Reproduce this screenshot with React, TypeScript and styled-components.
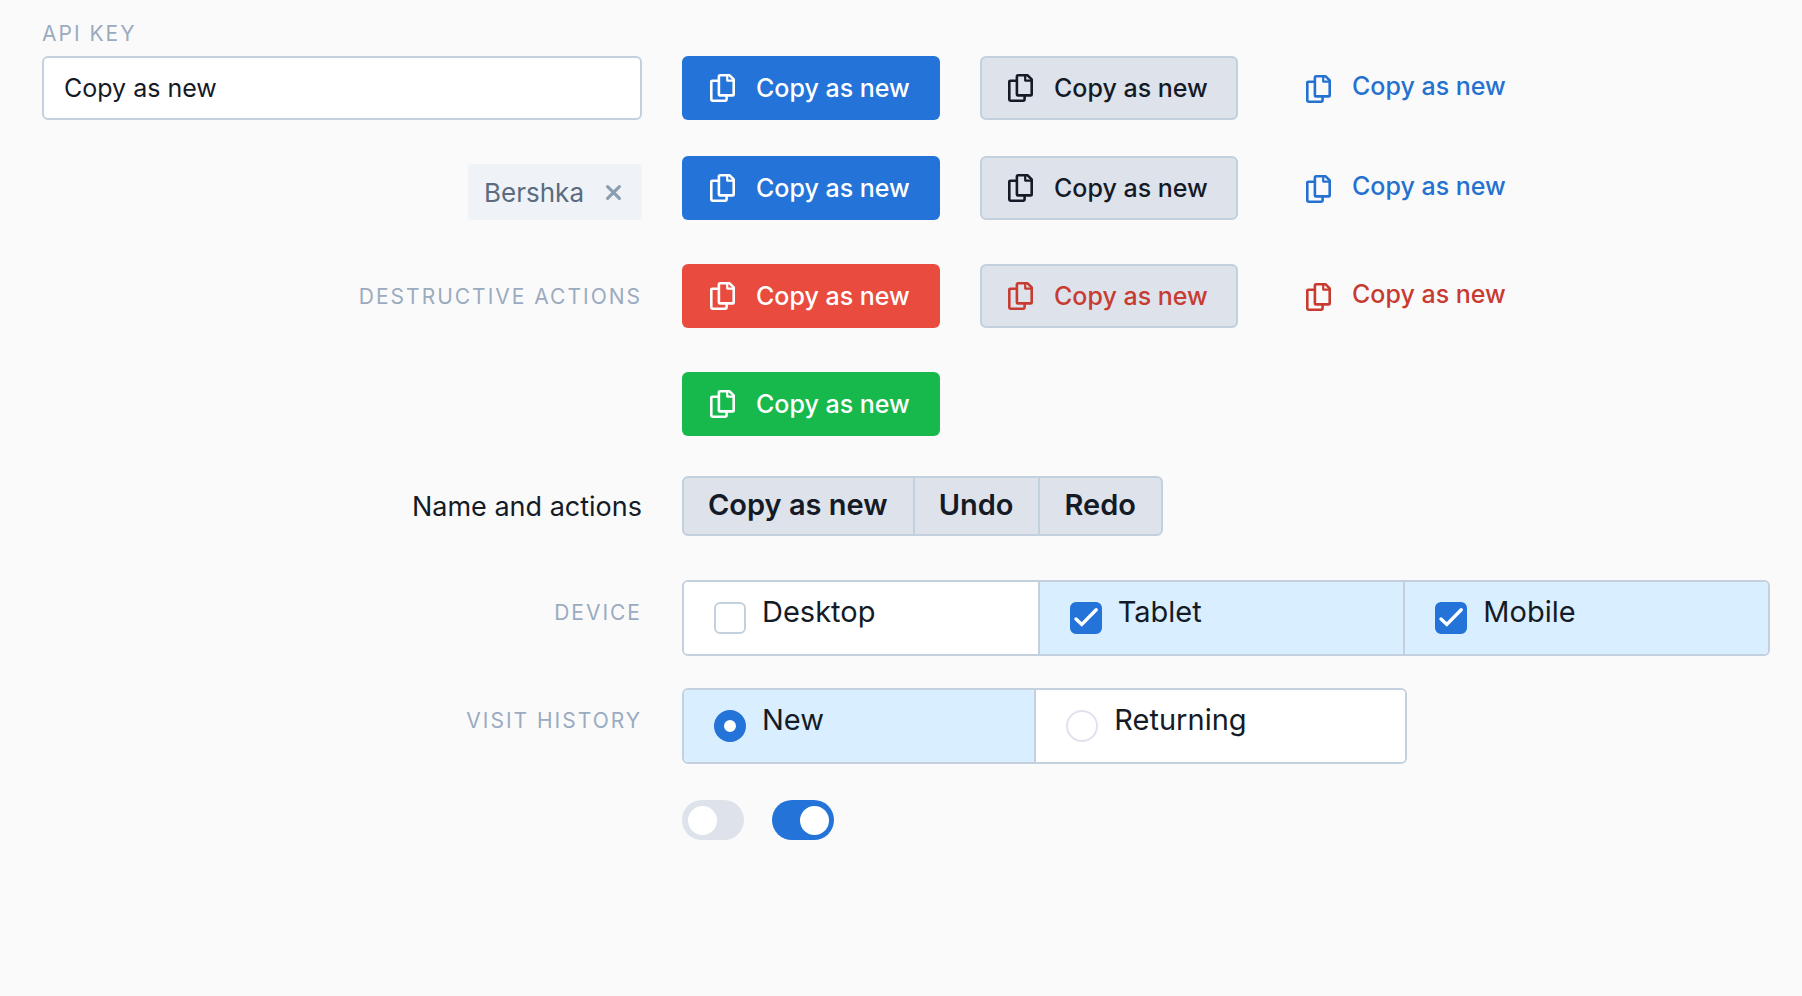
import React, { useState } from "react";
import styled, { createGlobalStyle, css } from "styled-components";

const color = {
  page: "#fafafb",
  ink: "#151b26",
  label: "#9aabbf",
  border: "#c3d0dd",
  blue: "#2373d9",
  blueText: "#2571cf",
  red: "#e94c3e",
  redText: "#c73b31",
  green: "#17b94c",
  grey: "#dde2eb",
  sky: "#d9eefe",
};

const GlobalStyle = createGlobalStyle`
  *, *::before, *::after { box-sizing: border-box; }
  body {
    margin: 0;
    background: ${color.page};
    color: ${color.ink};
    font-family: Inter, "Liberation Sans", sans-serif;
  }
  button, input { font: inherit; color: inherit; margin: 0; }
`;

const Page = styled.main`
  padding: 22px 32px 40px 42px;
`;

const Row = styled.div<{ $gap?: number; $align?: string }>`
  display: grid;
  grid-template-columns: minmax(0, 600px) minmax(0, 1088px);
  column-gap: 40px;
  align-items: ${(p) => p.$align ?? "center"};
  margin-top: ${(p) => p.$gap ?? 0}px;
`;

const Side = styled.div`
  display: flex;
  justify-content: flex-end;
`;

const Field = styled.div`
  display: flex;
  flex-direction: column;
  align-items: flex-start;
  gap: 10px;
`;

const capsText = css`
  font-size: 21px;
  line-height: 24px;
  letter-spacing: 2px;
  text-transform: uppercase;
  color: ${color.label};
`;

const FieldLabel = styled.label`
  ${capsText}
`;

const Caption = styled.span<{ $segment?: boolean }>`
  ${capsText}
  padding-top: ${(p) => (p.$segment ? 21 : 2)}px;
`;

const Name = styled.span`
  padding-top: 2px;
  font-size: 27px;
  line-height: 32px;
`;

const TextInput = styled.input`
  width: 100%;
  height: 64px;
  padding: 0 20px;
  border: 2px solid ${color.border};
  border-radius: 6px;
  background: #fff;
  font-size: 25px;
  outline: none;
`;

const Chip = styled.span`
  display: flex;
  align-items: center;
  gap: 21px;
  height: 56px;
  padding: 0 20px 0 16px;
  border-radius: 4px;
  background: #eff3f7;
  color: #5b6b80;
  font-size: 26px;
`;

const ChipRemove = styled.button`
  display: flex;
  padding: 0;
  border: 0;
  background: none;
  color: #8b9db1;
  cursor: pointer;
`;

const Actions = styled.div`
  display: flex;
  gap: 40px;
`;

type Kind = "solid" | "outline" | "ghost";

const Button = styled.button<{ $kind: Kind; $bg?: string; $fg: string }>`
  display: flex;
  align-items: center;
  gap: 21px;
  width: 258px;
  height: 64px;
  padding: 0 0 0 26px;
  border: 2px solid ${(p) => (p.$kind === "outline" ? color.border : "transparent")};
  border-radius: 6px;
  background: ${(p) => p.$bg ?? "none"} border-box;
  color: ${(p) => p.$fg};
  font-size: 25px;
  font-weight: 500;
  line-height: 32px;
  white-space: nowrap;
  cursor: pointer;

  svg {
    flex: none;
    margin-top: ${(p) => (p.$kind === "ghost" ? 2 : 0)}px;
  }
  span {
    padding-bottom: ${(p) => (p.$kind === "ghost" ? 4 : 0)}px;
  }
`;

const ButtonGroup = styled.div`
  display: flex;
  width: fit-content;
  border: 2px solid ${color.border};
  border-radius: 6px;
  background: ${color.grey};
`;

const GroupButton = styled.button`
  height: 56px;
  padding: 0 25px 4px 24px;
  border: 0;
  background: none;
  font-size: 29px;
  font-weight: 600;
  cursor: pointer;

  & + & {
    border-left: 2px solid ${color.border};
  }
`;

const Segments = styled.div<{ $columns: string; $width?: string }>`
  display: grid;
  grid-template-columns: ${(p) => p.$columns};
  width: ${(p) => p.$width ?? "100%"};
  border: 2px solid ${color.border};
  border-radius: 6px;
  background: #fff;
  overflow: hidden;
`;

const Segment = styled.label<{ $on: boolean }>`
  display: flex;
  align-items: flex-start;
  gap: 16px;
  height: 72px;
  padding: 14px 30px;
  background: ${(p) => (p.$on ? color.sky : "#fff")};
  font-size: 29px;
  line-height: 32px;
  cursor: pointer;

  & + & {
    border-left: 2px solid ${color.border};
  }
`;

const Mark = styled.span`
  display: grid;
  flex: none;
  margin-top: 6px;

  & > * {
    grid-area: 1 / 1;
  }
  svg {
    pointer-events: none;
  }
`;

const Checkbox = styled.input`
  appearance: none;
  width: 32px;
  height: 32px;
  border: 2px solid ${color.border};
  border-radius: 6px;
  background: #fff;

  &:checked {
    border-color: ${color.blue};
    background: ${color.blue};
  }
`;

const Radio = styled.input`
  appearance: none;
  width: 32px;
  height: 32px;
  border: 2px solid #e0e2ed;
  border-radius: 50%;
  background: #fff;

  &:checked {
    border: 10px solid ${color.blue};
  }
`;

const Switches = styled.div`
  display: flex;
  gap: 28px;
`;

const Switch = styled.input`
  appearance: none;
  display: flex;
  align-items: center;
  width: 62px;
  height: 40px;
  padding: 0 5px 0 6px;
  border-radius: 20px;
  background: ${color.grey};
  cursor: pointer;

  &::before {
    content: "";
    width: 29px;
    height: 29px;
    border-radius: 50%;
    background: #fff;
  }
  &:checked {
    justify-content: flex-end;
    background: ${color.blue};
  }
`;

const CopyIcon = () => (
  <svg width="25" height="28" viewBox="0 0 25 28" fill="none" stroke="currentColor" strokeWidth="2.6" strokeLinejoin="round" aria-hidden="true">
    <path d="M10 1.3H19.6L23.7 5.4V20.4Q23.7 21.4 22.7 21.4H10Q8.9 21.4 8.9 20.4V2.4Q8.9 1.3 10 1.3Z" />
    <path d="M17.2 1.5V6.6H23.4" strokeWidth="2.2" />
    <path d="M8.7 6.7H2.4Q1.3 6.7 1.3 7.8V25.6Q1.3 26.7 2.4 26.7H15.5Q16.6 26.7 16.6 25.6V21.6" />
  </svg>
);

const CloseIcon = () => (
  <svg width="17" height="17" viewBox="0 0 17 17" fill="none" stroke="currentColor" strokeWidth="3.2" strokeLinecap="round" aria-hidden="true">
    <path d="M2.6 2.6L14.4 14.4M14.4 2.6L2.6 14.4" />
  </svg>
);

const CheckIcon = () => (
  <svg width="32" height="32" viewBox="0 0 32 32" fill="none" stroke="#fff" strokeWidth="3.4" strokeLinecap="round" aria-hidden="true">
    <path d="M6 17L11.8 22.4L26.2 7.8" />
  </svg>
);

const CopyButton = (props: { $kind: Kind; $bg?: string; $fg: string }) => (
  <Button type="button" {...props}>
    <CopyIcon />
    <span>Copy as new</span>
  </Button>
);

export default function App() {
  const [devices, setDevices] = useState<Record<string, boolean>>({
    Desktop: false,
    Tablet: true,
    Mobile: true,
  });
  const [visit, setVisit] = useState("New");

  return (
    <>
      <GlobalStyle />
      <Page>
        <Row $align="end">
          <Field>
            <FieldLabel htmlFor="api-key">API key</FieldLabel>
            <TextInput id="api-key" type="text" defaultValue="Copy as new" />
          </Field>
          <Actions>
            <CopyButton $kind="solid" $bg={color.blue} $fg="#fff" />
            <CopyButton $kind="outline" $bg={color.grey} $fg={color.ink} />
            <CopyButton $kind="ghost" $fg={color.blueText} />
          </Actions>
        </Row>

        <Row $gap={36} $align="end">
          <Side>
            <Chip>
              Bershka
              <ChipRemove type="button" aria-label="Remove Bershka">
                <CloseIcon />
              </ChipRemove>
            </Chip>
          </Side>
          <Actions>
            <CopyButton $kind="solid" $bg={color.blue} $fg="#fff" />
            <CopyButton $kind="outline" $bg={color.grey} $fg={color.ink} />
            <CopyButton $kind="ghost" $fg={color.blueText} />
          </Actions>
        </Row>

        <Row $gap={44}>
          <Side>
            <Caption>Destructive actions</Caption>
          </Side>
          <Actions>
            <CopyButton $kind="solid" $bg={color.red} $fg="#fff" />
            <CopyButton $kind="outline" $bg={color.grey} $fg={color.redText} />
            <CopyButton $kind="ghost" $fg={color.redText} />
          </Actions>
        </Row>

        <Row $gap={44}>
          <Side />
          <Actions>
            <CopyButton $kind="solid" $bg={color.green} $fg="#fff" />
          </Actions>
        </Row>

        <Row $gap={40}>
          <Side>
            <Name id="actions-label">Name and actions</Name>
          </Side>
          <ButtonGroup role="group" aria-labelledby="actions-label">
            <GroupButton type="button">Copy as new</GroupButton>
            <GroupButton type="button">Undo</GroupButton>
            <GroupButton type="button">Redo</GroupButton>
          </ButtonGroup>
        </Row>

        <Row $gap={44} $align="start">
          <Side>
            <Caption $segment id="device-label">Device</Caption>
          </Side>
          <Segments $columns="355fr 367fr 366fr" role="group" aria-labelledby="device-label">
            {Object.entries(devices).map(([name, on]) => (
              <Segment key={name} $on={on}>
                <Mark>
                  <Checkbox
                    type="checkbox"
                    checked={on}
                    onChange={() => setDevices({ ...devices, [name]: !on })}
                  />
                  {on && <CheckIcon />}
                </Mark>
                {name}
              </Segment>
            ))}
          </Segments>
        </Row>

        <Row $gap={32} $align="start">
          <Side>
            <Caption $segment id="visit-label">Visit history</Caption>
          </Side>
          <Segments $columns="352fr 372fr" $width="66.6%" role="radiogroup" aria-labelledby="visit-label">
            {["New", "Returning"].map((name) => (
              <Segment key={name} $on={visit === name}>
                <Mark>
                  <Radio
                    type="radio"
                    name="visit"
                    checked={visit === name}
                    onChange={() => setVisit(name)}
                  />
                </Mark>
                {name}
              </Segment>
            ))}
          </Segments>
        </Row>

        <Row $gap={36}>
          <Side />
          <Switches>
            <Switch type="checkbox" role="switch" aria-label="First option" />
            <Switch type="checkbox" role="switch" aria-label="Second option" defaultChecked />
          </Switches>
        </Row>
      </Page>
    </>
  );
}
